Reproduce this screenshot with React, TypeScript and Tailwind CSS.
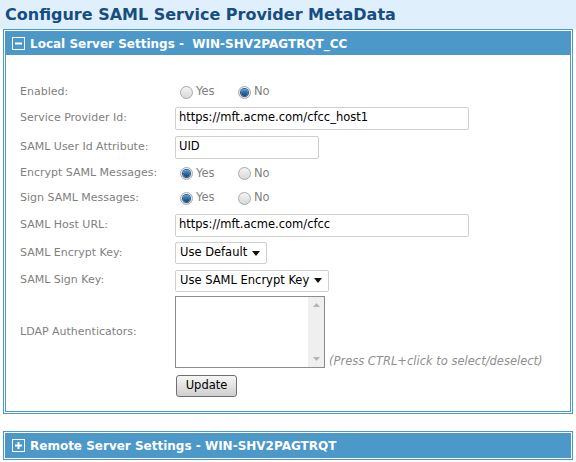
import React from "react";

const FONT = { fontFamily: '"DejaVu Sans", Verdana, sans-serif' };

function Radio({ checked }: { checked?: boolean }) {
  return (
    <span className="relative inline-flex h-[13px] w-[13px] items-center justify-center rounded-full border border-[#a9a9a9] bg-gradient-to-b from-[#f4f4f4] to-[#d9d9d9]">
      {checked && (
        <span className="h-[7px] w-[7px] rounded-full bg-gradient-to-b from-[#4fa0dc] to-[#123f73] shadow-[0_0_0_1px_#2a5b8d]" />
      )}
    </span>
  );
}

function YesNo({ yes }: { yes: boolean }) {
  return (
    <div className="flex items-center pl-[5px] text-[11.5px] text-[#7f7f7f]">
      <Radio checked={yes} />
      <span className="ml-[3px] w-[42px]">Yes</span>
      <Radio checked={!yes} />
      <span className="ml-[3px]">No</span>
    </div>
  );
}

function Row({ label, h, children }: { label: string; h: string; children?: React.ReactNode }) {
  return (
    <div className={`flex items-center ${h}`}>
      <div className="w-[155px] shrink-0 text-[11px] text-[#7f7f7f]">{label}</div>
      {children}
    </div>
  );
}

function TextBox({ value, w }: { value: string; w: string }) {
  return (
    <div className={`flex h-[23px] items-center rounded-[2px] border border-[#cfcfcf] bg-white px-[3px] text-[11.5px] text-black ${w}`}>
      {value}
    </div>
  );
}

function Select({ value, w }: { value: string; w: string }) {
  return (
    <div className={`flex h-[22px] items-center justify-between rounded-[2px] border border-[#cfcfcf] bg-white pl-[4px] pr-[6px] text-[11.5px] text-black ${w}`}>
      <span>{value}</span>
      <svg width="8" height="5" viewBox="0 0 8 5">
        <path d="M0 0h8L4 5z" fill="#111" />
      </svg>
    </div>
  );
}

function PanelHeader({ open, title }: { open: boolean; title: string }) {
  return (
    <div className="flex h-[23px] items-center bg-[#4b98c9] pl-[6px] text-[12px] font-bold text-white">
      <span className="flex h-[13px] w-[13px] items-center justify-center border-[1.5px] border-white">
        <svg width="7" height="7" viewBox="0 0 7 7">
          <rect x="0" y="2.5" width="7" height="2" fill="#fff" />
          {!open && <rect x="2.5" y="0" width="2" height="7" fill="#fff" />}
        </svg>
      </span>
      <span className="ml-[5px] whitespace-pre">{title}</span>
    </div>
  );
}

export default function App() {
  return (
    <div className="h-[462px] w-[576px] bg-white" style={FONT}>
      <div className="flex h-[29px] items-center bg-[#dff0fc] pl-[5px] text-[16px] font-bold text-[#174d80]">
        Configure SAML Service Provider MetaData
      </div>

      {/* Local server panel */}
      <div className="mx-[3px] border border-[#4b98c9] bg-white p-px">
        <div className="border border-[#4b98c9]">
          <PanelHeader open title={"Local Server Settings -  WIN-SHV2PAGTRQT_CC"} />
          <div className="pl-[14px] pt-[25px] pb-[14px]">
            <Row label="Enabled:" h="h-[24px]">
              <YesNo yes={false} />
            </Row>
            <Row label="Service Provider Id:" h="h-[28px]">
              <TextBox value="https://mft.acme.com/cfcc_host1" w="w-[294px]" />
            </Row>
            <Row label="SAML User Id Attribute:" h="h-[30px]">
              <TextBox value="UID" w="w-[144px]" />
            </Row>
            <Row label="Encrypt SAML Messages:" h="h-[23px]">
              <YesNo yes />
            </Row>
            <Row label="Sign SAML Messages:" h="h-[26px]">
              <YesNo yes />
            </Row>
            <Row label="SAML Host URL:" h="h-[28px]">
              <TextBox value="https://mft.acme.com/cfcc" w="w-[294px]" />
            </Row>
            <Row label="SAML Encrypt Key:" h="h-[28px]">
              <Select value="Use Default" w="w-[92px]" />
            </Row>
            <Row label="SAML Sign Key:" h="h-[27px]">
              <Select value="Use SAML Encrypt Key" w="w-[154px]" />
            </Row>
            <Row label="LDAP Authenticators:" h="h-[76px]">
              <div className="flex items-end">
                <div className="flex h-[72px] w-[150px] border border-[#8c8c8c] bg-white">
                  <div className="flex-1" />
                  <div className="flex w-[16px] flex-col items-center justify-between bg-[#efefef] py-[6px]">
                    <svg width="7" height="4" viewBox="0 0 7 4">
                      <path d="M0 4L3.5 0L7 4z" fill="#b5b5b5" />
                    </svg>
                    <svg width="7" height="4" viewBox="0 0 7 4">
                      <path d="M0 0h7L3.5 4z" fill="#b5b5b5" />
                    </svg>
                  </div>
                </div>
                <span className="ml-[4px] text-[11.5px] leading-[13px] italic text-[#8f8f8f]">
                  (Press CTRL+click to select/deselect)
                </span>
              </div>
            </Row>
            <div className="mt-[5px] pl-[156px]">
              <button className="flex h-[22px] w-[61px] items-center justify-center rounded-[3px] border border-[#707070] bg-gradient-to-b from-[#f6f6f6] to-[#cfcfcf] text-[11.5px] text-black">
                Update
              </button>
            </div>
          </div>
        </div>
      </div>

      {/* Remote server panel */}
      <div className="mx-[3px] mt-[17px] border border-[#4b98c9] bg-white p-px">
        <div className="border border-[#4b98c9]">
          <PanelHeader open={false} title="Remote Server Settings - WIN-SHV2PAGTRQT" />
        </div>
      </div>
    </div>
  );
}
